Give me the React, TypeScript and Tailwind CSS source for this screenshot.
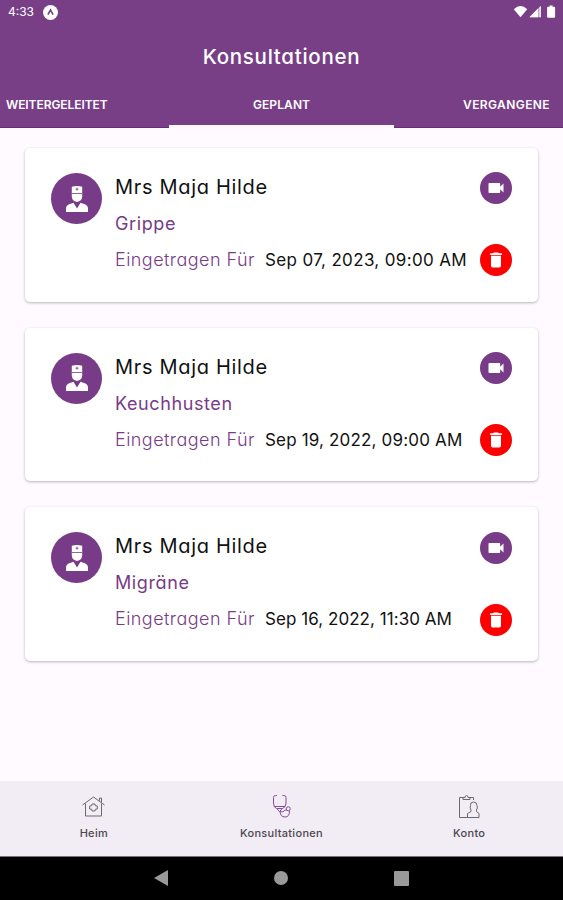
import { useState } from "react";
import type { ReactNode } from "react";
import { MdDelete, MdVideocam } from "react-icons/md";

type Consultation = {
  id: number;
  name: string;
  reason: string;
  date: string;
  dateClass: string;
};

const consultations: Consultation[] = [
  { id: 1, name: "Mrs Maja Hilde", reason: "Grippe", date: "Sep 07, 2023, 09:00 AM", dateClass: "tracking-[0.35px]" },
  { id: 2, name: "Mrs Maja Hilde", reason: "Keuchhusten", date: "Sep 19, 2022, 09:00 AM", dateClass: "tracking-[0.17px]" },
  { id: 3, name: "Mrs Maja Hilde", reason: "Migräne", date: "Sep 16, 2022, 11:30 AM", dateClass: "tracking-[0.05px]" },
];

function StatusBar() {
  return (
    <div className="flex h-6 items-center pl-2 pr-[6px]">
      <span className="text-[12px]">4:33</span>
      <svg className="ml-[9px]" width="15" height="15" viewBox="0 0 15 15">
        <circle cx="7.5" cy="7.5" r="7.5" fill="#fff" />
        <path d="M4.9 9.7 7.5 5l2.6 4.7" fill="none" stroke="#783f87" strokeWidth="1.6" />
      </svg>
      <svg className="ml-auto" width="44" height="14" viewBox="0 0 44 14" fill="#fff">
        <path d="M.8 4.2Q7.5-2 14.2 4.2L7.5 12.3Z" />
        <path d="M16.4 12.3 27.6 1v11.3Z" opacity=".55" />
        <path d="M16.4 12.3 25 3.6v8.7ZM26.6 2v10.3h1.2V1Z" />
        <path d="M36.6.5h3v1.2h1.5q1 0 1 1v9q0 1-1 1h-6q-1 0-1-1v-9q0-1 1-1h1.5Z" />
      </svg>
    </div>
  );
}

function DoctorAvatar() {
  return (
    <div className="flex h-[51px] w-[51px] shrink-0 items-center justify-center rounded-full bg-[#783b88]">
      <svg width="24" height="28" viewBox="0 0 24 28" fill="#fff">
        <path d="M6.8 1.8Q12 0 17.2 1.8V11.5q-.3 4.5-5.2 5.5Q7.1 16 6.8 11.5Z" />
        <path d="M12 2.7v3M10.5 4.2h3M7 8.5h10" fill="none" stroke="#783b88" strokeWidth=".8" />
        <path d="M1 27v-3.5q0-3 3.2-4.3l4.3-1.5L12 23.5l3.5-5.8 4.300 1.500Q23 20.500 23 23.500V27Z" />
      </svg>
    </div>
  );
}

function ConsultationCard({ item }: { item: Consultation }) {
  return (
    <div className="flex h-[153.6px] rounded-[5px] bg-white px-[26px] pt-[25px] shadow-[0_1px_3px_rgba(0,0,0,0.28)]">
      <DoctorAvatar />
      <div className="ml-[13px] flex-1 whitespace-nowrap">
        <p className="h-7 text-[20px] leading-7 tracking-[0.68px] text-[#111]">{item.name}</p>
        <p className="mt-[9px] h-7 text-[18px] leading-7 tracking-[0.6px] text-[#783b88]">{item.reason}</p>
        <div className="mt-2 flex h-7 text-[17px] leading-7">
          <span className="w-[150px] text-[18px] font-light tracking-[0.45px] text-[#783b88]">Eingetragen Für</span>
          <span className={`text-[#111] ${item.dateClass}`}>{item.date}</span>
        </div>
      </div>
      <div className="-mt-[0.6px] flex w-8 flex-col gap-10">
        <button className="flex h-8 w-8 items-center justify-center rounded-full bg-[#783b88] text-white">
          <MdVideocam size={20} />
        </button>
        <button className="flex h-8 w-8 items-center justify-center rounded-full bg-[#fe0000] text-white">
          <MdDelete size={20} />
        </button>
      </div>
    </div>
  );
}

function NavItem({ label, children }: { label: string; children: ReactNode }) {
  return (
    <button className="flex flex-1 flex-col items-center pt-[13px]">
      {children}
      <span className="mt-[7px] text-[11px] font-medium leading-[14px] tracking-[0.3px] text-[#4c474f] [font-feature-settings:normal]">{label}</span>
    </button>
  );
}

function BottomNav() {
  return (
    <nav className="flex h-[75px] bg-[#f2ecf4]">
      <NavItem label="Heim">
        <svg width="25" height="25" viewBox="0 0 25 25" fill="none" stroke="#6c6872" strokeWidth="1">
          <path d="M1.5 11 12.5 3l11 8M4.5 9.5V22h16V9.5M18.5 6.8V4h2v4.3" />
          <path d="M11 10h3l.3 1.7 2 .3v3l-2 .3L14 17h-3l-.3-1.7-2-.3v-3l2-.3Z" />
        </svg>
      </NavItem>
      <NavItem label="Konsultationen">
        <svg width="25" height="25" viewBox="0 0 25 25" fill="none" stroke="#83519a" strokeWidth="1">
          <path d="M8 1.5H6.5q-2 0-2 2V9q0 4.500 3 5.500h6q3.500-1 3.500-5.500V3.500q0-2-2-2h-1.500" />
          <path d="M5.500 12.500h10.500M8 14.700l2.500 3 2.500-3M11 17.700q.5 5.300 5 5.300t4.500-6" />
          <path d="M11 17.500q3.500 1.500 5-1.500h2" />
          <circle cx="19.3" cy="14.8" r="2" />
        </svg>
      </NavItem>
      <NavItem label="Konto">
        <svg width="25" height="25" viewBox="0 0 25 25" fill="none" stroke="#6c6872" strokeWidth="1">
          <path d="M12 23.500H2.500V3.500h4M13 3.500h3.500V6M6 5.500v-2h2q0-2 1.500-2t1.500 2h2v2Z" />
          <path d="M14 16q-1.500-2-.5-4.500-.500-3.500 3-3.500t3.500 3.500q1 2.500-.5 4.500v1.500l2.500 2v4H10.500v-4l3.500-2Z" />
        </svg>
      </NavItem>
    </nav>
  );
}

export default function App() {
  const [activeTab, setActiveTab] = useState(1);

  return (
    <div className="flex h-[900px] w-full flex-col overflow-hidden bg-[#fefaff] font-[Inter,sans-serif] [font-feature-settings:'cv11']">
      <header className="flex h-[128px] shrink-0 flex-col border-b border-[#6b2b79] bg-[#783f87] text-white">
        <StatusBar />
        <h1 className="mt-[17px] h-8 text-center text-[20.5px] font-medium leading-8 tracking-[0.72px]">Konsultationen</h1>
        <div className="relative mt-4 flex h-[38px] justify-between pl-[6px] pr-[13px] text-[12px] font-semibold leading-8">
          <button onClick={() => setActiveTab(0)} className="flex w-[163px] tracking-[-0.07px]">WEITERGELEITET</button>
          <button onClick={() => setActiveTab(1)} className="flex w-[225px] justify-center tracking-[0.1px]">GEPLANT</button>
          <button onClick={() => setActiveTab(2)} className="flex w-[156px] justify-end tracking-[0.4px]">VERGANGENE</button>
          <span
            className="absolute -bottom-px h-[3px] w-[225px] bg-[#fdf7fe]"
            style={{ left: 169 + (activeTab - 1) * 225 }}
          />
        </div>
      </header>
      <main className="flex flex-1 flex-col gap-[26px] px-[25px] pt-5">
        {consultations.map((item) => (
          <ConsultationCard key={item.id} item={item} />
        ))}
      </main>
      <BottomNav />
      <div className="flex h-[44px] items-center justify-center gap-[106px] border-t border-[#77737a] bg-black pb-px">
        <svg width="14" height="16" viewBox="0 0 14 16" fill="#999">
          <path d="M14 0v16L0 8Z" />
        </svg>
        <span className="h-[14px] w-[14px] rounded-full bg-[#999]" />
        <span className="h-[15px] w-[15px] rounded-[1px] bg-[#999]" />
      </div>
    </div>
  );
}
